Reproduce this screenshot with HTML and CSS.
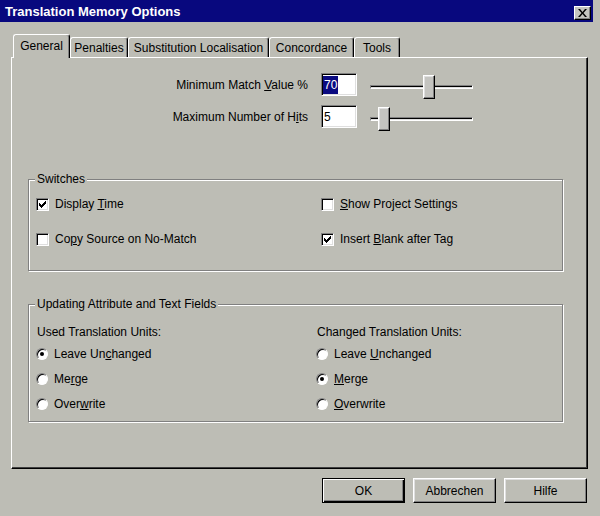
FILE: index.html
```html
<!DOCTYPE html>
<html>
<head>
<meta charset="utf-8">
<title>Translation Memory Options</title>
<link rel="stylesheet" href="styles.css">
</head>
<body>
<div class="window">
  <div class="titlebar">
    <span class="title">Translation Memory Options</span>
    <span class="close"><svg width="9" height="8" viewBox="0 0 9 8"><path d="M0 0h2l2.5 3 2.5-3h2L5.5 4 9 8H7L4.5 5 2 8H0l3.5-4z" fill="#000"/></svg></span>
  </div>
  <div class="content">
    <div class="tabs">
      <div class="tab selected t-gen">General</div>
      <div class="tab t-pen">Penalties</div>
      <div class="tab t-sub">Substitution Localisation</div>
      <div class="tab t-con">Concordance</div>
      <div class="tab t-too">Tools</div>
    </div>
    <div class="panel">
      <div class="sliders">
        <div class="slabel">Minimum Match <u>V</u>alue %</div>
        <div class="field"><span class="sel">70</span></div>
        <div class="slider"><div class="track"></div><div class="thumb" style="left:53px"></div></div>
        <div class="slabel">Maximum Number of H<u>i</u>ts</div>
        <div class="field"><span class="val">5</span></div>
        <div class="slider"><div class="track"></div><div class="thumb" style="left:8px"></div></div>
      </div>
      <fieldset class="group g1">
        <legend>Switches</legend>
        <div class="g1grid">
          <div class="opt"><span class="check"><svg width="7" height="7" viewBox="0 0 7 7"><path d="M6 0h1v3H6v1H5v1H4v1H3v1H2V6H1V5H0V2h1v1h1v1h1V3h1V2h1V1h1z" fill="#000"/></svg></span><span>Display <u>T</u>ime</span></div>
          <div class="opt"><span class="check"></span><span><u>S</u>how Project Settings</span></div>
          <div class="opt"><span class="check"></span><span>Co<u>p</u>y Source on No-Match</span></div>
          <div class="opt"><span class="check"><svg width="7" height="7" viewBox="0 0 7 7"><path d="M6 0h1v3H6v1H5v1H4v1H3v1H2V6H1V5H0V2h1v1h1v1h1V3h1V2h1V1h1z" fill="#000"/></svg></span><span>Insert <u>B</u>lank after Tag</span></div>
        </div>
      </fieldset>
      <fieldset class="group g2">
        <legend>Updating Attribute and Text Fields</legend>
        <div class="cols">
          <div class="col">
            <div class="head">Used Translation Units:</div>
            <div class="opt"><span class="radio on"></span><span>Leave Un<u>c</u>hanged</span></div>
            <div class="opt"><span class="radio"></span><span>Me<u>r</u>ge</span></div>
            <div class="opt"><span class="radio"></span><span>Over<u>w</u>rite</span></div>
          </div>
          <div class="col">
            <div class="head">Changed Translation Units:</div>
            <div class="opt"><span class="radio"></span><span>Leave <u>U</u>nchanged</span></div>
            <div class="opt"><span class="radio on"></span><span><u>M</u>erge</span></div>
            <div class="opt"><span class="radio"></span><span><u>O</u>verwrite</span></div>
          </div>
        </div>
      </fieldset>
    </div>
    <div class="buttons">
      <div class="btn default">OK</div>
      <div class="btn">Abbrechen</div>
      <div class="btn">Hilfe</div>
    </div>
  </div>
</div>
</body>
</html>
```

FILE: styles.css
```css
* { box-sizing: border-box; }

html, body {
  margin: 0;
  padding: 0;
}

body {
  width: 600px;
  height: 516px;
  overflow: hidden;
  background: #bdbdb5;
  font-family: "Liberation Sans", Arial, sans-serif;
  font-size: 12px;
  color: #000;
}

.window {
  height: 516px;
  display: flex;
  flex-direction: column;
}

.titlebar {
  width: 593px;
  height: 22px;
  background: #08087e;
  display: flex;
  align-items: center;
  justify-content: space-between;
  padding: 0 2px 0 5px;
}

.title {
  color: #fff;
  font-weight: bold;
  font-size: 13px;
}

.close {
  width: 17px;
  height: 14px;
  margin-top: 3px;
  background: #c4c4c0;
  border: 1px solid;
  border-color: #fff #000 #000 #fff;
  box-shadow: inset -1px -1px 0 #808080;
  display: flex;
  align-items: center;
  justify-content: center;
}

.content {
  padding: 12px 0 0 11px;
}

.tabs {
  display: flex;
  align-items: flex-end;
  height: 23px;
  padding-left: 2px;
}

.tab {
  height: 20px;
  border-top: 1px solid #fff;
  border-left: 1px solid #fff;
  border-right: 1px solid #000;
  box-shadow: inset -1px 0 0 #808080;
  border-radius: 3px 3px 0 0;
  display: flex;
  align-items: center;
  justify-content: center;
  background: #bdbdb5;
}

.tab.selected {
  height: 24px;
  margin-bottom: -1px;
  position: relative;
  z-index: 1;
  padding-bottom: 2px;
}

.t-gen { width: 57px; }
.t-pen { width: 58px; }
.t-sub { width: 141px; }
.t-con { width: 85px; }
.t-too { width: 46px; }

.panel {
  width: 577px;
  height: 412px;
  border: 1px solid;
  border-color: #fff #000 #000 #fff;
  box-shadow: inset -1px -1px 0 #404040;
  padding-top: 15px;
}

.sliders {
  display: grid;
  grid-template-columns: 296px 36px 103px;
  grid-auto-rows: 23px;
  column-gap: 13px;
  row-gap: 9px;
  align-items: center;
}

.slabel {
  text-align: right;
}

.field {
  height: 23px;
  background: #fff;
  border: 1px solid;
  border-color: #808080 #fff #fff #808080;
  box-shadow: inset 1px 1px 0 #000, inset -1px -1px 0 #dfdfdf;
  padding-left: 1px;
  display: flex;
  align-items: center;
}

.sel {
  background: #0a0a80;
  color: #fff;
  line-height: 18px;
  padding: 0 1px;
}

.val {
  padding-left: 1px;
}

.slider {
  position: relative;
  height: 24px;
  align-self: start;
  margin-top: 2px;
}

.track {
  margin-top: 10px;
  height: 4px;
  border-top: 1px solid #808080;
  border-left: 1px solid #808080;
  border-bottom: 1px solid #fff;
  border-right: 1px solid #fff;
  background: #dfdfdf;
  box-shadow: inset 0 1px 0 #000;
}

.thumb {
  position: absolute;
  top: 0;
  width: 12px;
  height: 24px;
  background: #c4c4c0;
  border: 1px solid;
  border-color: #fff #000 #000 #fff;
  box-shadow: inset -1px -1px 0 #808080, inset 1px 1px 0 #dfdfdf;
}

.group {
  margin: 0 0 0 16px;
  padding: 0;
  min-width: 0;
  width: 535px;
  border: 1px solid #808080;
  box-shadow: 1px 1px 0 #fff, inset 1px 1px 0 #fff;
}

.g1 { margin-top: 44px; }
.g2 { margin-top: 26px; }

.group legend {
  margin-left: 6px;
  padding: 0 2px;
  line-height: 14px;
  background: #bdbdb5;
}

.g1grid {
  display: grid;
  grid-template-columns: 285px 1fr;
  row-gap: 17px;
  padding: 9px 0 22px 7px;
}

.opt {
  display: flex;
  align-items: center;
  gap: 6px;
  height: 18px;
}

.check {
  width: 13px;
  height: 13px;
  background: #fff;
  border: 1px solid;
  border-color: #808080 #fff #fff #808080;
  box-shadow: inset 1px 1px 0 #000, inset -1px -1px 0 #dfdfdf;
  display: flex;
  align-items: center;
  justify-content: center;
}

.check svg {
  display: block;
}

.cols {
  display: grid;
  grid-template-columns: 280px 1fr;
  padding: 12px 0 8px 7px;
}

.col {
  display: flex;
  flex-direction: column;
  gap: 7px;
}

.head {
  height: 18px;
  line-height: 18px;
  padding-left: 1px;
  margin-bottom: -3px;
}

.radio {
  width: 12px;
  height: 12px;
  border-radius: 50%;
  background: #fff;
  border: 1px solid;
  border-color: #808080 #fff #fff #808080;
  box-shadow: inset 1px 1px 0 #000;
  display: flex;
  align-items: center;
  justify-content: center;
}

.radio.on::after {
  content: "";
  width: 4px;
  height: 4px;
  border-radius: 50%;
  background: #000;
}

.buttons {
  width: 577px;
  margin-top: 9px;
  padding-right: 1px;
  display: flex;
  justify-content: flex-end;
  gap: 8px;
}

.btn {
  width: 83px;
  height: 25px;
  border: 1px solid;
  border-color: #fff #000 #000 #fff;
  box-shadow: inset -1px -1px 0 #808080, inset 1px 1px 0 #dfdfdf;
  display: flex;
  align-items: center;
  justify-content: center;
}

.btn.default {
  border: 1px solid #000;
  box-shadow: inset 1px 1px 0 #fff, inset -1px -1px 0 #000, inset -2px -2px 0 #808080;
}
```
